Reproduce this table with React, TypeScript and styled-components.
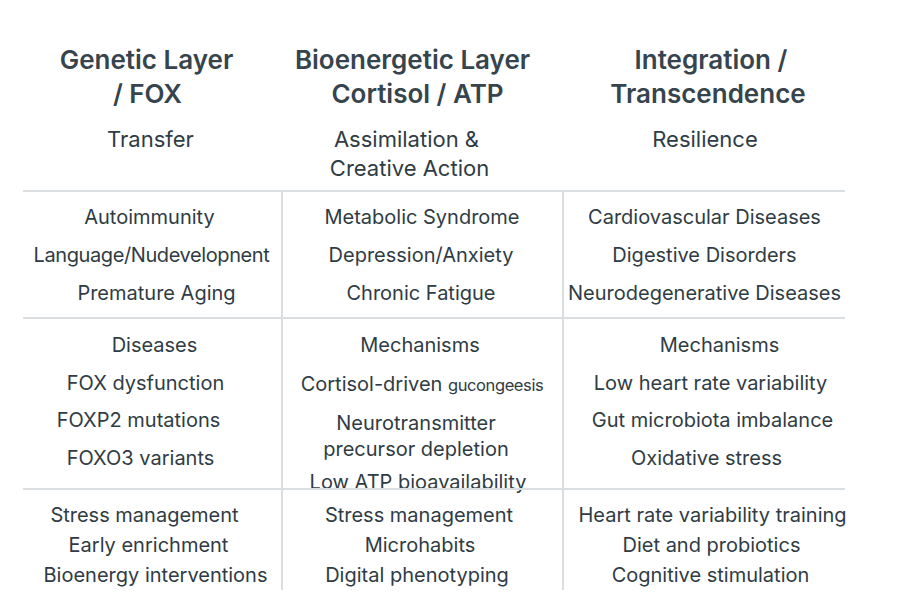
import React from "react";
import styled, { createGlobalStyle } from "styled-components";

const Global = createGlobalStyle`
  html, body { margin: 0; padding: 0; background: #ffffff; }
  body { font-family: Inter, "Open Sans", "Liberation Sans", sans-serif; color: #2f3c44; }
`;

const Page = styled.div`
  width: 900px;
  height: 600px;
  overflow: hidden;
  padding-left: 23px;
  box-sizing: border-box;
`;

const Table = styled.div`
  display: grid;
  grid-template-columns: 259px 281px 282px;
  grid-template-rows: 190px 127px 171px 102px;
`;

const HeadCell = styled.div`
  display: flex;
  flex-direction: column;
  align-items: center;
  text-align: center;
  padding-top: 43px;
  box-sizing: border-box;
`;

const shift = (dx?: number) => {
  const d = dx ?? 0;
  return `margin-left: ${Math.max(0, 2 * d)}px; margin-right: ${Math.max(0, -2 * d)}px;`;
};

const TitleLine = styled.div<{ $dx?: number }>`
  font-size: 26px;
  font-weight: 600;
  line-height: 33.5px;
  color: #36444d;
  white-space: nowrap;
  ${(p) => shift(p.$dx)}
`;

const SubBlock = styled.div`
  margin-top: 15px;
  display: flex;
  flex-direction: column;
  align-items: center;
`;

const SubLine = styled.div<{ $dx?: number }>`
  font-size: 22px;
  font-weight: 400;
  line-height: 29px;
  color: #2f3c44;
  white-space: nowrap;
  ${(p) => shift(p.$dx)}
`;

const Cell = styled.div<{ $divider?: boolean; $pad: number }>`
  border-top: 2px solid #dadee1;
  border-left: ${(p) => (p.$divider ? "2px solid #dadee1" : "none")};
  margin-left: ${(p) => (p.$divider ? "-1px" : "0")};
  padding-top: ${(p) => p.$pad}px;
  box-sizing: border-box;
  display: flex;
  flex-direction: column;
  align-items: center;
  text-align: center;
  font-size: 20px;
  color: #2f3c44;
  min-width: 0;
`;

const Line = styled.div<{ $lh: number; $top?: number; $tight?: boolean; $dx?: number }>`
  line-height: ${(p) => p.$lh}px;
  white-space: nowrap;
  letter-spacing: ${(p) => (p.$tight ? "-0.4px" : "0")};
  margin-top: ${(p) => p.$top ?? 0}px;
  ${(p) => shift(p.$dx)}
`;

const Small = styled.span`
  font-size: 16.5px;
  letter-spacing: -0.4px;
`;

export default function App() {
  return (
    <>
      <Global />
      <Page>
        <Table>
          <HeadCell>
            <TitleLine $dx={-6}>Genetic Layer</TitleLine>
            <TitleLine $dx={-5}>/ FOX</TitleLine>
            <SubBlock>
              <SubLine $dx={-2}>Transfer</SubLine>
            </SubBlock>
          </HeadCell>
          <HeadCell>
            <TitleLine $dx={-10}>Bioenergetic Layer</TitleLine>
            <TitleLine $dx={-5}>Cortisol / ATP</TitleLine>
            <SubBlock>
              <SubLine $dx={-16}>Assimilation &amp;</SubLine>
              <SubLine $dx={-13}>Creative Action</SubLine>
            </SubBlock>
          </HeadCell>
          <HeadCell>
            <TitleLine $dx={7}>Integration /</TitleLine>
            <TitleLine $dx={4}>Transcendence</TitleLine>
            <SubBlock>
              <SubLine $dx={1}>Resilience</SubLine>
            </SubBlock>
          </HeadCell>

          <Cell $pad={6}>
            <Line $lh={38} $dx={-3}>Autoimmunity</Line>
            <Line $lh={38} $tight $dx={-1}>Language/Nudevelopnent</Line>
            <Line $lh={38} $dx={4}>Premature Aging</Line>
          </Cell>
          <Cell $pad={6} $divider>
            <Line $lh={38} $dx={-1}>Metabolic Syndrome</Line>
            <Line $lh={38} $dx={-2}>Depression/Anxiety</Line>
            <Line $lh={38} $dx={-2}>Chronic Fatigue</Line>
          </Cell>
          <Cell $pad={6} $divider>
            <Line $lh={38}>Cardiovascular Diseases</Line>
            <Line $lh={38}>Digestive Disorders</Line>
            <Line $lh={38}>Neurodegenerative Diseases</Line>
          </Cell>

          <Cell $pad={8}>
            <Line $lh={37.5} $dx={2}>Diseases</Line>
            <Line $lh={37.5} $dx={-7}>FOX dysfunction</Line>
            <Line $lh={37.5} $dx={-14}>FOXP2 mutations</Line>
            <Line $lh={37.5} $dx={-12}>FOXO3 variants</Line>
          </Cell>
          <Cell $pad={8} $divider>
            <Line $lh={37} $dx={-3}>Mechanisms</Line>
            <Line $lh={40} $dx={-1}>Cortisol-driven <Small>gucongeesis</Small></Line>
            <Line $lh={26} $top={5} $dx={-7}>Neurotransmitter<br />precursor depletion</Line>
            <Line $lh={40} $dx={-5}>Low ATP bioavailability</Line>
          </Cell>
          <Cell $pad={8} $divider>
            <Line $lh={37.5} $dx={15}>Mechanisms</Line>
            <Line $lh={37.5} $dx={6}>Low heart rate variability</Line>
            <Line $lh={37.5} $dx={8}>Gut microbiota imbalance</Line>
            <Line $lh={37.5} $dx={2}>Oxidative stress</Line>
          </Cell>

          <Cell $pad={10}>
            <Line $lh={30} $dx={-8}>Stress management</Line>
            <Line $lh={30} $dx={-4}>Early enrichment</Line>
            <Line $lh={30} $dx={3}>Bioenergy interventions</Line>
          </Cell>
          <Cell $pad={10} $divider>
            <Line $lh={30} $dx={-4}>Stress management</Line>
            <Line $lh={30} $dx={-3}>Microhabits</Line>
            <Line $lh={30} $dx={-6}>Digital phenotyping</Line>
          </Cell>
          <Cell $pad={10} $divider>
            <Line $lh={30} $dx={8}>Heart rate variability training</Line>
            <Line $lh={30} $dx={7}>Diet and probiotics</Line>
            <Line $lh={30} $dx={6}>Cognitive stimulation</Line>
          </Cell>
        </Table>
      </Page>
    </>
  );
}
